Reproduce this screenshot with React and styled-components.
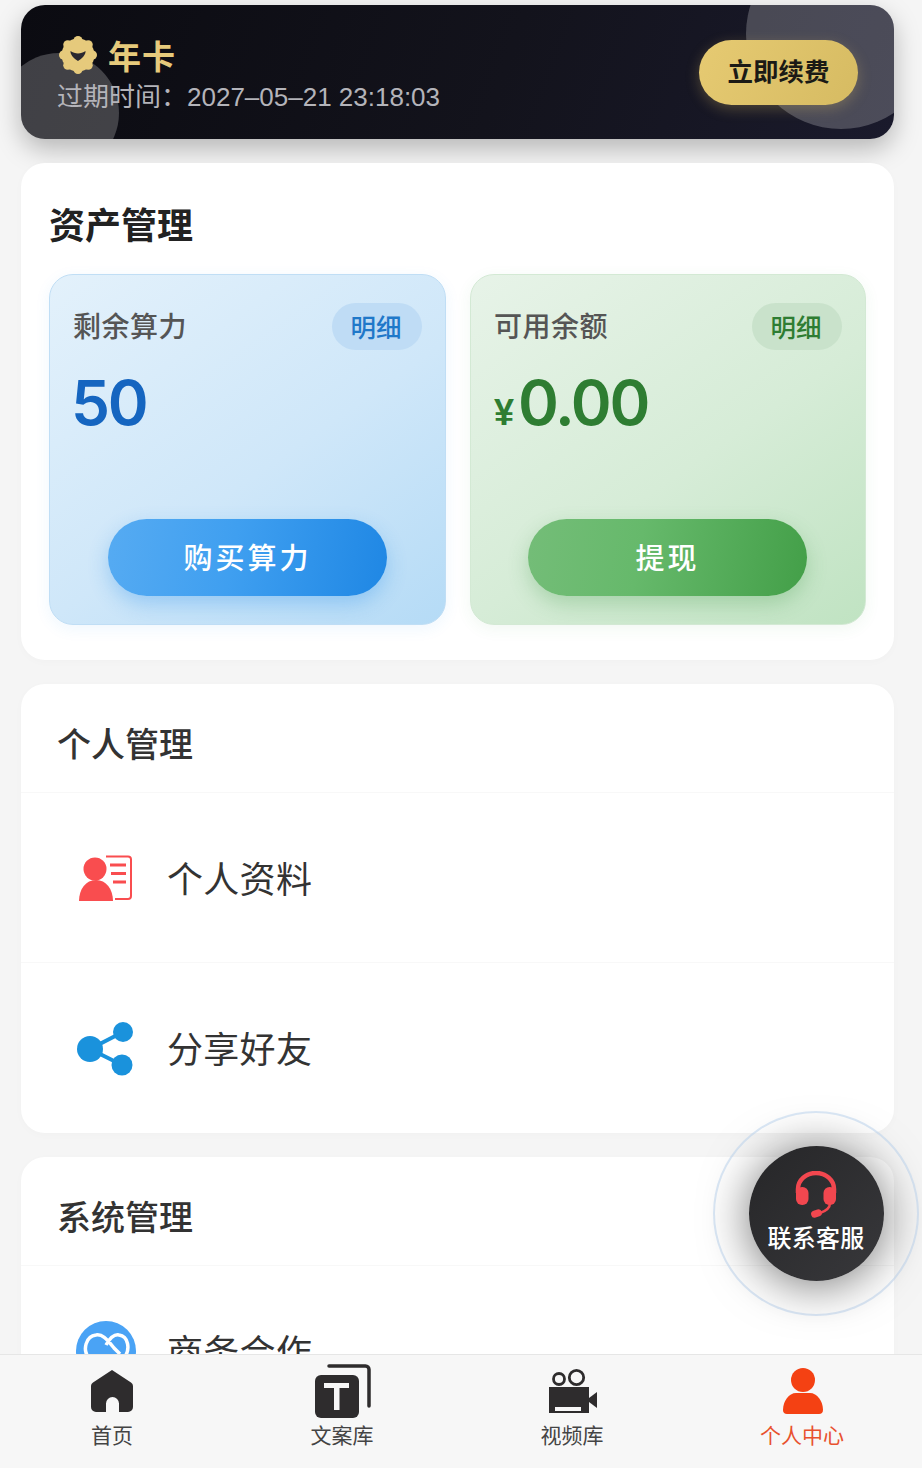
import React from "react";
import styled, { createGlobalStyle } from "styled-components";

const tones = {
  blue: {
    card: "linear-gradient(145deg, #e3f1fb 0%, #cfe7f9 55%, #b5dbf6 100%)",
    border: "#c0def5",
    pill: "#bfdcf5",
    pillText: "#1f78c9",
    value: "#1565c0",
    button: "linear-gradient(100deg, #56abf2 0%, #3f9ff0 45%, #1f87e4 100%)",
    glow: "rgba(33, 140, 235, 0.3)",
    buttonShift: 0,
  },
  green: {
    card: "linear-gradient(145deg, #e7f3e8 0%, #d6ecd7 55%, #c0e3c2 100%)",
    border: "#d3e9d4",
    pill: "#c9e2cb",
    pillText: "#2e7d32",
    value: "#2e7d32",
    button: "linear-gradient(100deg, #74bd78 0%, #66b96b 40%, #439f48 100%)",
    glow: "rgba(60, 150, 70, 0.28)",
    buttonShift: 1,
  },
};

const GlobalStyle = createGlobalStyle`
  html, body {
    margin: 0;
    padding: 0;
    background: #f5f5f5;
  }
  * {
    box-sizing: border-box;
  }
  body {
    font-family: "Liberation Sans", "Noto Sans CJK SC", sans-serif;
  }
`;

const Page = styled.div`
  width: 922px;
  height: 1468px;
  position: relative;
  display: flex;
  flex-direction: column;
  overflow: hidden;
  background: #f5f5f5;
`;

const Scroller = styled.main`
  flex: 1;
  min-height: 0;
  overflow: hidden;
  padding: 5px 28px 0 21px;
  display: flex;
  flex-direction: column;
  gap: 24px;
`;

const Banner = styled.section`
  flex: none;
  position: relative;
  height: 134px;
  border-radius: 24px;
  overflow: hidden;
  background: linear-gradient(110deg, #0b0b11 0%, #13131c 55%, #1a1a2c 100%);
  display: flex;
  align-items: center;
  justify-content: space-between;
  padding: 0 36px 0 36px;
`;

const BannerShadow = styled.div`
  flex: none;
  border-radius: 24px;
  box-shadow: 0 10px 26px rgba(0, 0, 0, 0.26);
`;

const Bubble = styled.span`
  position: absolute;
  border-radius: 50%;
  background: rgba(255, 255, 255, 0.22);
  left: ${(p) => p.$left}px;
  top: ${(p) => p.$top}px;
  width: ${(p) => p.$size}px;
  height: ${(p) => p.$size}px;
`;

const BannerInfo = styled.div`
  position: relative;
  display: flex;
  flex-direction: column;
  padding-top: 5px;
`;

const PlanRow = styled.div`
  display: flex;
  align-items: center;
  gap: 11px;
  margin-left: 2px;
  height: 42px;
`;

const PlanName = styled.span`
  font-size: 33px;
  font-weight: 700;
  letter-spacing: 1px;
  color: #e6ca7c;
`;

const Expire = styled.div`
  margin-top: 3px;
  font-size: 26px;
  line-height: 36px;
  color: #b4b4ba;
  white-space: nowrap;
`;

const RenewButton = styled.button`
  position: relative;
  width: 159px;
  height: 65px;
  border: none;
  border-radius: 33px;
  background: linear-gradient(120deg, #e6ca72 0%, #d6bb62 100%);
  box-shadow: 0 4px 14px rgba(224, 190, 100, 0.28);
  color: #1b1a16;
  font-family: inherit;
  font-size: 25.5px;
  font-weight: 700;
  padding: 0 0 5px;
`;

const Card = styled.section`
  flex: none;
  background: #fff;
  border-radius: 24px;
  box-shadow: 0 2px 10px rgba(0, 0, 0, 0.02);
`;

const AssetCard = styled(Card)`
  height: 497px;
  padding: 0 28px;
`;

const AssetTitle = styled.h2`
  margin: 0;
  height: 111px;
  display: flex;
  align-items: center;
  padding-top: 8px;
  font-size: 36px;
  font-weight: 700;
  color: #222;
`;

const AssetGrid = styled.div`
  display: grid;
  grid-template-columns: 397px 396px;
  gap: 24px;
`;

const Tile = styled.div`
  height: 351px;
  border-radius: 24px;
  border: 1px solid ${(p) => tones[p.$tone].border};
  background: ${(p) => tones[p.$tone].card};
  box-shadow: 0 4px 16px ${(p) => tones[p.$tone].glow.replace(/0\.\d+\)/, "0.07)")};
  padding: 28px 23px 28px 23px;
  display: flex;
  flex-direction: column;
`;

const TileHead = styled.div`
  display: flex;
  align-items: center;
  justify-content: space-between;
`;

const TileLabel = styled.span`
  font-size: 28px;
  font-weight: 500;
  letter-spacing: 0.5px;
  color: #555;
  padding-bottom: 4px;
`;

const DetailPill = styled.span`
  width: 90px;
  height: 47px;
  border-radius: 24px;
  background: ${(p) => tones[p.$tone].pill};
  color: ${(p) => tones[p.$tone].pillText};
  font-size: 25.5px;
  font-weight: 500;
  display: flex;
  align-items: center;
  justify-content: center;
  padding: 0 2px 3px 0;
`;

const TileValue = styled.div`
  margin: 15px 0 0 -2px;
  height: 76px;
  display: flex;
  align-items: baseline;
  font-family: Inter, "Liberation Sans", sans-serif;
  font-size: 62px;
  line-height: 76px;
  font-weight: 600;
  letter-spacing: -2.2px;
  color: ${(p) => tones[p.$tone].value};
`;

const Currency = styled.span`
  font-family: "Liberation Sans", sans-serif;
  font-size: 36px;
  font-weight: 700;
  letter-spacing: 0;
  margin: 0 4px 0 2px;
`;

const TileButton = styled.button`
  align-self: center;
  margin-top: auto;
  margin-right: ${(p) => tones[p.$tone].buttonShift}px;
  width: 279px;
  height: 77px;
  border: none;
  border-radius: 39px;
  background: ${(p) => tones[p.$tone].button};
  box-shadow: 0 8px 20px ${(p) => tones[p.$tone].glow};
  color: #fff;
  font-family: inherit;
  font-size: 29px;
  font-weight: 500;
  letter-spacing: 3px;
  padding: 0 0 4px;
`;

const SectionHead = styled.h2`
  margin: 0;
  height: 109px;
  display: flex;
  align-items: center;
  padding: 8px 0 0 36px;
  font-size: 34px;
  font-weight: 500;
  color: #333;
  border-bottom: 1px solid #f8f8f8;
`;

const MenuRow = styled.div`
  height: 170px;
  display: flex;
  align-items: center;
  gap: 32px;
  padding-left: 55px;
  border-bottom: ${(p) => (p.$last ? "none" : "1px solid #f8f8f8")};
`;

const MenuIcon = styled.svg`
  flex: none;
  width: 60px;
  height: 60px;
`;

const MenuText = styled.span`
  font-size: 36px;
  color: #333;
  padding-bottom: 2px;
  margin-left: -1px;
  letter-spacing: 0.3px;
`;

const TabBar = styled.nav`
  flex: none;
  height: 114px;
  position: relative;
  background: #f7f7f7;
  border-top: 1px solid #e6e6e6;
  display: grid;
  grid-template-columns: repeat(4, 230px);
`;

const Tab = styled.div`
  display: flex;
  flex-direction: column;
  align-items: center;
  padding: 8px 6px 0 0;
  color: ${(p) => (p.$active ? "#e8512e" : "#444")};
`;

const TabIcon = styled.svg`
  display: block;
  width: 60px;
  height: 60px;
`;

const TabLabel = styled.span`
  margin-top: -2px;
  font-size: 21px;
  line-height: 30px;
`;

const FloatRing = styled.div`
  position: absolute;
  left: 713px;
  top: 1111px;
  width: 206px;
  height: 205px;
  border-radius: 50%;
  border: 2px solid rgba(185, 212, 240, 0.5);
  background: rgba(255, 255, 255, 0.1);
  display: flex;
  align-items: center;
  justify-content: center;
`;

const FloatButton = styled.div`
  width: 135px;
  height: 135px;
  border-radius: 50%;
  background: linear-gradient(135deg, #262628 0%, #38383b 100%);
  box-shadow: 0 4px 48px rgba(0, 0, 0, 0.55);
  display: flex;
  flex-direction: column;
  align-items: center;
  padding-top: 25px;
`;

const FloatLabel = styled.span`
  margin-top: 2px;
  font-size: 24px;
  line-height: 32px;
  font-weight: 500;
  letter-spacing: 0.3px;
  color: #fff;
`;

const scallops = [0, 45, 90, 135, 180, 225, 270, 315];

const BadgeIcon = () => (
  <svg width="38" height="38" viewBox="0 0 38 38">
    <circle cx="19" cy="19" r="16.500" fill="#e6ca7c" />
    {scallops.map((deg) => (
      <circle
        key={deg}
        cx={19 + 14.5 * Math.sin((deg * Math.PI) / 180)}
        cy={19 - 14.5 * Math.cos((deg * Math.PI) / 180)}
        r="4.500"
        fill="#e6ca7c"
      />
    ))}
    <path fill="#2a2830" d="M11.500 15c2 1.500 5 2.500 7.500 2.500s5.500-1 7.500-2.500c.5 3.500-3.500 7.500-7.500 10-4-2.500-8-6.500-7.500-10z" />
  </svg>
);

const AssetTile = ({ tone, label, value, currency, action }) => (
  <Tile $tone={tone}>
    <TileHead>
      <TileLabel>{label}</TileLabel>
      <DetailPill $tone={tone}>明细</DetailPill>
    </TileHead>
    <TileValue $tone={tone}>
      {currency && <Currency>¥</Currency>}
      {value}
    </TileValue>
    <TileButton $tone={tone}>{action}</TileButton>
  </Tile>
);

const ProfileIcon = () => (
  <MenuIcon viewBox="0 0 60 60">
    <circle cx="19" cy="21" r="11.500" fill="#f94d4f" />
    <path d="M3 53C3 41 10 32 20 32s17 9 17 21z" fill="#f94d4f" />
    <path d="M30 8.500h22a3 3 0 0 1 3 3V48a3 3 0 0 1-3 3H39" fill="none" stroke="#f94d4f" strokeWidth="2" />
    <path d="M34 17h16M35 25.500h15M37 34h13" stroke="#f94d4f" strokeWidth="3.200" />
  </MenuIcon>
);

const ShareIcon = () => (
  <MenuIcon viewBox="0 0 60 60">
    <path d="M14 31L47 14M14 31l32 16" stroke="#1a92dc" strokeWidth="4" />
    <circle cx="14" cy="31" r="13" fill="#1a92dc" />
    <circle cx="47" cy="14" r="10" fill="#1a92dc" />
    <circle cx="46" cy="47" r="10.500" fill="#1a92dc" />
  </MenuIcon>
);

const PartnerIcon = () => (
  <MenuIcon viewBox="0 0 60 60">
    <circle cx="30" cy="30" r="30" fill="#4aa3f5" />
    <path
      d="M30 54L13 37C6 29 10 15 20 14c6-1 10 3 18 13l6 6M30 24c4-7 8-11 13-10 9 1 12 14 5 23L38 46"
      fill="none"
      stroke="#fff"
      strokeWidth="3.500"
    />
  </MenuIcon>
);

const HeadsetIcon = () => (
  <svg width="44" height="50" viewBox="0 0 44 50">
    <path d="M4 22v-4a18 16 0 0 1 36 0v4" fill="none" stroke="#f2474f" strokeWidth="4.500" />
    <rect x="2" y="16" width="12.500" height="18" rx="6" fill="#f2474f" />
    <rect x="29.500" y="16" width="12.500" height="18" rx="6" fill="#f2474f" />
    <path d="M36 32c0 5-4 8-10 10" fill="none" stroke="#f2474f" strokeWidth="2.500" />
    <rect x="17" y="39" width="11" height="7" rx="3.500" transform="rotate(-18 22.500 42.500)" fill="#f2474f" />
  </svg>
);

const HomeIcon = () => (
  <TabIcon viewBox="0 0 60 60">
    <path
      fill="#2e2c2d"
      d="M30 7l19 12.500a4 4 0 0 1 2 3.500v21a5 5 0 0 1-5 5h-9v-8.500a6.500 6.500 0 0 0-13 0V49H14a5 5 0 0 1-5-5V23a4 4 0 0 1 2-3.500z"
    />
  </TabIcon>
);

const CopyIcon = () => (
  <TabIcon viewBox="0 0 60 60">
    <rect x="3" y="12" width="44" height="43" rx="6" fill="#2e2c2d" />
    <path d="M12 20h25v5h-9.500v22h-5.500V25H12z" fill="#f7f7f7" />
    <path d="M17 3h36.500a3.500 3.500 0 0 1 3.500 3.500V43" fill="none" stroke="#2e2c2d" strokeWidth="3.500" strokeLinecap="round" />
  </TabIcon>
);

const CameraIcon = () => (
  <TabIcon viewBox="0 0 60 60">
    <circle cx="17" cy="16" r="5.500" fill="none" stroke="#2e2c2d" strokeWidth="2.800" />
    <circle cx="34.500" cy="14.500" r="7.200" fill="none" stroke="#2e2c2d" strokeWidth="2.800" />
    <rect x="7" y="24" width="40" height="26" fill="#2e2c2d" />
    <path d="M47 35l8-6v16l-8-6z" fill="#2e2c2d" />
    <rect x="13" y="44" width="26" height="4" fill="#f7f7f7" />
  </TabIcon>
);

const PersonIcon = () => (
  <TabIcon viewBox="0 0 60 60">
    <circle cx="31" cy="17" r="12" fill="#f44113" />
    <path
      d="M24 30h14c7 0 13 8 13 17 0 2.500-1.500 4-4 4H15c-2.500 0-4-1.500-4-4 0-9 6-17 13-17z"
      fill="#f44113"
    />
  </TabIcon>
);

const App = () => (
  <Page>
    <GlobalStyle />
    <Scroller>
      <BannerShadow>
        <Banner>
          <Bubble $left={-22} $top={48} $size={120} />
          <Bubble $left={725} $top={-66} $size={190} />
          <BannerInfo>
            <PlanRow>
              <BadgeIcon />
              <PlanName>年卡</PlanName>
            </PlanRow>
            <Expire>过期时间：2027–05–21 23:18:03</Expire>
          </BannerInfo>
          <RenewButton>立即续费</RenewButton>
        </Banner>
      </BannerShadow>

      <AssetCard>
        <AssetTitle>资产管理</AssetTitle>
        <AssetGrid>
          <AssetTile tone="blue" label="剩余算力" value="50" action="购买算力" />
          <AssetTile tone="green" label="可用余额" value="0.00" currency action="提现" />
        </AssetGrid>
      </AssetCard>

      <Card>
        <SectionHead>个人管理</SectionHead>
        <MenuRow>
          <ProfileIcon />
          <MenuText>个人资料</MenuText>
        </MenuRow>
        <MenuRow $last>
          <ShareIcon />
          <MenuText>分享好友</MenuText>
        </MenuRow>
      </Card>

      <Card>
        <SectionHead>系统管理</SectionHead>
        <MenuRow $last>
          <PartnerIcon />
          <MenuText>商务合作</MenuText>
        </MenuRow>
      </Card>
    </Scroller>

    <TabBar>
      <Tab>
        <HomeIcon />
        <TabLabel>首页</TabLabel>
      </Tab>
      <Tab>
        <CopyIcon />
        <TabLabel>文案库</TabLabel>
      </Tab>
      <Tab>
        <CameraIcon />
        <TabLabel>视频库</TabLabel>
      </Tab>
      <Tab $active>
        <PersonIcon />
        <TabLabel>个人中心</TabLabel>
      </Tab>
    </TabBar>

    <FloatRing>
      <FloatButton>
        <HeadsetIcon />
        <FloatLabel>联系客服</FloatLabel>
      </FloatButton>
    </FloatRing>
  </Page>
);

export default App;
